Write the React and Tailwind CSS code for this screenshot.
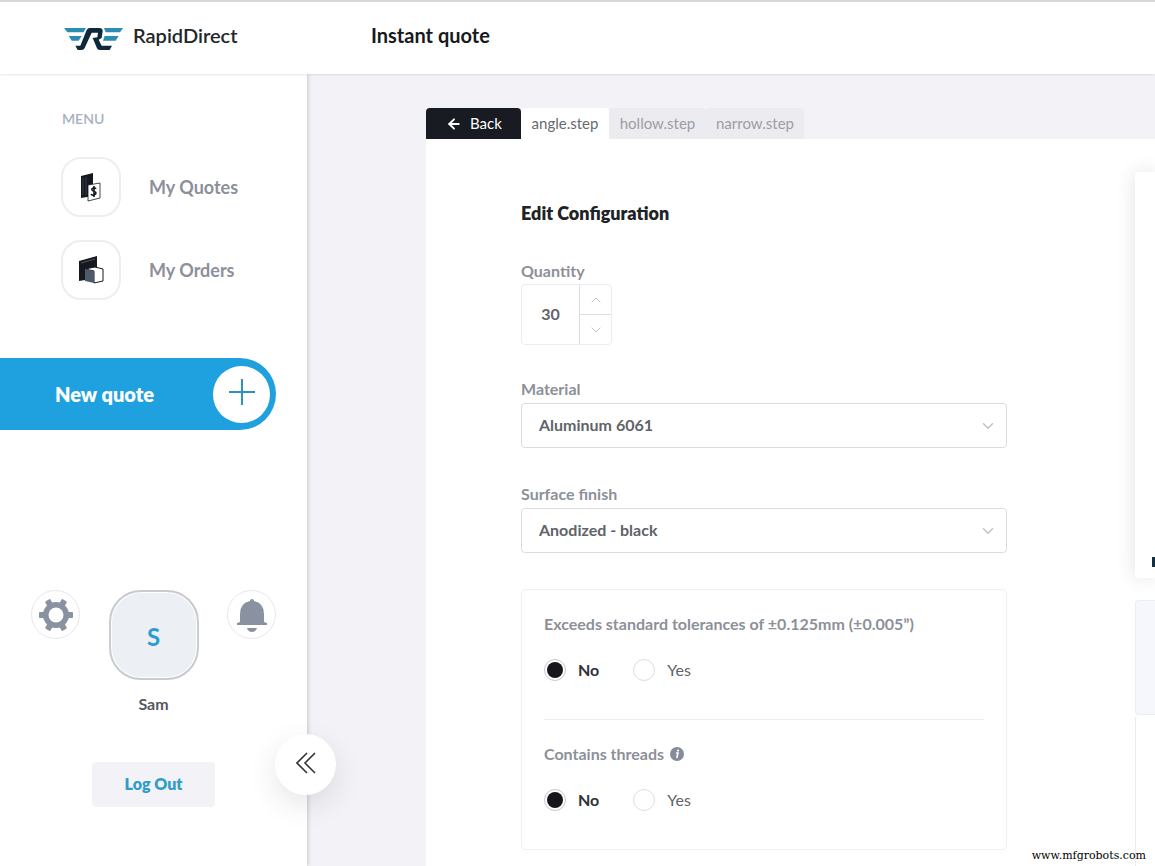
import React from 'react';
import { ArrowLeft, ChevronDown, ChevronUp } from 'lucide-react';

const Logo = () => (
  <svg viewBox="0 0 177 66" className="w-[59px] h-[22px] shrink-0" aria-hidden="true">
    <g fill="#2b8cb4">
      <path d="M0 0h66l-8 13H10z" />
      <path d="M14 24h39l-9 14H23z" />
      <path d="M120 0h57l-9 13h-43z" />
      <path d="M122 24h42l-9 14h-38z" />
    </g>
    <path
      d="M34 53h15L68 6q3-6 9-6h29q10 0 10 10l-3 20-9 5 9 18h31l-7 13h-30q-6 0-8-5L86 30l14-2 2-14H83L62 60q-3 6-9 6H41z"
      fill="#0e2a3a"
    />
  </svg>
);

const QuotesIcon = () => (
  <svg viewBox="0 0 28 30" className="w-7 h-[30px]" aria-hidden="true">
    <path d="M4 4 16 1v23L4 26z" fill="#15181e" />
    <path d="M6 6v17M9 5v18" stroke="#3a4350" strokeWidth="1" />
    <path d="m11 13 12-2v15l-12 3z" fill="#fff" stroke="#15181e" strokeWidth="0.8" />
    <path d="M19 17c-1-2-5-1-4 1 1 2 4 1 4 3s-4 3-5 1M17 14v11" fill="none" stroke="#15181e" strokeWidth="1.6" />
  </svg>
);

const OrdersIcon = () => (
  <svg viewBox="0 0 28 30" className="w-7 h-[30px]" aria-hidden="true">
    <path d="M2 6 20 1v22L2 26z" fill="#15181e" />
    <path d="m4 8 14-4" stroke="#4b5563" />
    <path d="m8 14 10-2 8 2v12l-9 2V16z" fill="#fff" stroke="#15181e" strokeLinejoin="round" />
    <path d="m8 14 9 2v12l-9-2z" fill="#4d5a6c" />
  </svg>
);

const GearIcon = () => (
  <svg viewBox="0 0 34 34" className="w-[34px] h-[34px]" fill="#8a92a1" aria-hidden="true">
    <rect x="0" y="14" width="34" height="6" rx="1" />
    <rect x="0" y="14" width="34" height="6" rx="1" transform="rotate(60 17 17)" />
    <rect x="0" y="14" width="34" height="6" rx="1" transform="rotate(120 17 17)" />
    <circle cx="17" cy="17" r="13" />
    <circle cx="17" cy="17" r="7.5" fill="#fff" />
  </svg>
);

const BellIcon = () => (
  <svg viewBox="0 0 32 34" className="w-8 h-[34px]" fill="#8a92a1" aria-hidden="true">
    <path d="M14 3q0-2 2-2t2 2q10 2 10 13v8l3 1v2H1v-2l3-1v-8Q4 5 14 3z" />
    <path d="M11 30h10q-1 4-5 4t-5-4z" />
  </svg>
);

const InfoIcon = () => (
  <svg viewBox="0 0 14 14" className="w-[14px] h-[14px]" aria-hidden="true">
    <circle cx="7" cy="7" r="7" fill="#858b9b" />
    <circle cx="8" cy="3.6" r="1.1" fill="#fff" />
    <path d="M6 6h2L6.7 11" fill="none" stroke="#fff" strokeWidth="1.6" />
  </svg>
);

const menu = [
  { label: 'My Quotes', icon: QuotesIcon },
  { label: 'My Orders', icon: OrdersIcon },
];

const Header = () => (
  <header className="relative z-10 flex items-center h-[74px] pl-16 bg-white border-t-2 border-[#d8d8da] shadow-[0_1px_2px_rgba(0,0,0,0.1)]">
    <a href="#home" className="flex items-center gap-2.5 w-[307px] shrink-0 pt-0.5 text-xl leading-6 font-semibold text-[#23262b]">
      <Logo />
      <span className="pb-2">RapidDirect</span>
    </a>
    <h1 className="pb-1.5 text-xl leading-6 font-bold text-[#17191c]">Instant quote</h1>
  </header>
);

const Sidebar = () => (
  <aside className="relative w-[307px] shrink-0 bg-white shadow-[1px_0_4px_rgba(0,0,0,0.18)]">
    <h2 className="pt-9 pl-[62px] text-sm leading-[18px] font-semibold text-[#a9b0bd]">MENU</h2>
    <nav className="flex flex-col gap-[23px] mt-[29px] pl-[61px]">
      {menu.map(({ label, icon: Icon }) => (
        <a key={label} href="#menu" className="flex items-center gap-7 text-lg font-bold text-[#8c9099]">
          <span className="flex items-center justify-center w-[60px] h-[60px] rounded-[20px] border-2 border-[#eeeeef]">
            <Icon />
          </span>
          {label}
        </a>
      ))}
    </nav>

    <button className="flex items-center justify-between w-[276px] h-[72px] mt-[58px] pl-[55px] pr-[6px] rounded-r-full bg-[#20a1df] text-xl font-extrabold text-white">
      New quote
      <span className="flex items-center justify-center w-[57px] h-[57px] rounded-full bg-white">
        <svg viewBox="0 0 26 26" className="w-[26px] h-[26px] mb-1" stroke="#2b93bd" strokeWidth="2" aria-hidden="true">
          <path d="M13 0v26M0 13h26" />
        </svg>
      </span>
    </button>

    <div className="flex justify-between mt-[160px] px-[31px]">
      <button aria-label="Settings" className="flex items-center justify-center w-[49px] h-[49px] rounded-full border border-[#e6e7eb]">
        <GearIcon />
      </button>
      <div className="flex flex-col items-center gap-3.5">
        <div className="flex items-center justify-center w-[90px] h-[90px] pt-1 rounded-[32px] border-2 border-[#c9cbd0] bg-[#eceff4] shadow-[inset_0_0_0_1px_#fff] text-2xl font-bold text-[#2b9bd0]">
          S
        </div>
        <span className="text-base leading-5 font-bold text-[#55585e]">Sam</span>
      </div>
      <button aria-label="Notifications" className="flex items-center justify-center w-[49px] h-[49px] rounded-full border border-[#e6e7eb]">
        <BellIcon />
      </button>
    </div>

    <button className="block w-[123px] h-[45px] mt-12 mx-auto pb-0.5 rounded bg-[#f2f2f7] text-base font-extrabold text-[#2f9dc9]">Log Out</button>

    {/* Collapse handle sits on the sidebar edge */}
    <button
      aria-label="Collapse menu"
      className="absolute top-[660px] -right-[29px] flex items-center justify-center w-[61px] h-[61px] pb-1 rounded-full bg-white shadow-[0_10px_30px_rgba(0,0,0,0.1)]"
    >
      <svg viewBox="0 0 20 22" className="w-5 h-[22px]" fill="none" stroke="#333" strokeWidth="1.6" aria-hidden="true">
        <path d="M11 1 1 11l10 10M19 1 9 11l10 10" />
      </svg>
    </button>
  </aside>
);

const Tabs = () => (
  <div className="flex h-[31px] text-[15px] leading-[31px]">
    <button className="flex items-center gap-2 w-[95px] pl-5 rounded-t bg-[#191b22] text-white">
      <ArrowLeft className="w-4 h-4" strokeWidth={3} />
      Back
    </button>
    <button className="w-[88px] rounded-t bg-white text-[#666a70]">angle.step</button>
    <button className="w-[97px] rounded-t bg-[#ececf0] text-[#9b9ea5]">hollow.step</button>
    <button className="w-[98px] rounded-t bg-[#ececf0] text-[#9b9ea5]">narrow.step</button>
  </div>
);

const SelectField = ({ id, label, value }) => (
  <div>
    <label htmlFor={id} className="block text-base leading-5 font-bold text-[#8c9099]">{label}</label>
    <div className="relative mt-1">
      <select
        id={id}
        defaultValue={value}
        className="appearance-none block w-full h-[45px] pl-[17px] pr-10 pb-0.5 rounded border border-[#dcdcde] bg-white text-base font-bold text-[#606368]"
      >
        <option>{value}</option>
      </select>
      <ChevronDown className="absolute right-2.5 top-[14px] w-[18px] h-[18px] text-[#c2c3c7] pointer-events-none" strokeWidth={2} />
    </div>
  </div>
);

const RadioField = ({ name, label, info }) => (
  <fieldset>
    <legend className="flex items-center gap-1.5 text-base leading-5 font-bold text-[#8c9099]">
      {label}
      {info && <InfoIcon />}
    </legend>
    <div className="flex gap-[34px] mt-[25px] text-base leading-[22px] text-[#606368]">
      {['No', 'Yes'].map((option) => (
        <label key={option} className="flex items-center gap-3 has-checked:font-bold has-checked:text-[#303238]">
          <input
            type="radio"
            name={name}
            defaultChecked={option === 'No'}
            className="appearance-none w-[22px] h-[22px] p-0.5 rounded-full border border-[#dedee1] bg-clip-content checked:border-[#c8c8cc] checked:bg-[#15171b]"
          />
          {option}
        </label>
      ))}
    </div>
  </fieldset>
);

const ConfigForm = () => (
  <form className="w-[486px] shrink-0 pt-16">
    <h2 className="text-lg leading-5 font-extrabold text-[#202226]">Edit Configuration</h2>

    <label htmlFor="quantity" className="block mt-[38px] text-base leading-5 font-bold text-[#8c9099]">Quantity</label>
    <div className="flex w-[91px] h-[61px] mt-[3px] rounded border border-[#ececee]">
      <input id="quantity" defaultValue="30" className="w-[57px] pb-0.5 text-center text-base font-bold text-[#606368]" />
      <div className="flex flex-col flex-1 border-l border-[#dedee1] text-[#c2c3c7]">
        <button type="button" aria-label="Increase" className="flex flex-1 items-center justify-center border-b border-[#dedee1]">
          <ChevronUp className="w-4 h-4" strokeWidth={1.5} />
        </button>
        <button type="button" aria-label="Decrease" className="flex flex-1 items-center justify-center">
          <ChevronDown className="w-4 h-4" strokeWidth={1.5} />
        </button>
      </div>
    </div>

    <div className="flex flex-col gap-9 mt-[34px]">
      <SelectField id="material" label="Material" value="Aluminum 6061" />
      <SelectField id="finish" label="Surface finish" value="Anodized - black" />

      <div className="h-[261px] px-[22px] pt-6 rounded border border-[#f0f0f1]">
        <RadioField name="tolerances" label="Exceeds standard tolerances of ±0.125mm (±0.005”)" />
        <hr className="mt-[38px] mb-6 border-[#ececee]" />
        <RadioField name="threads" label="Contains threads" info />
      </div>
    </div>
  </form>
);

const Preview = () => (
  <div className="flex flex-col flex-1 min-w-0 pt-[33px]">
    <div className="relative h-[406px] rounded-l bg-white shadow-[0_0_20px_rgba(0,0,0,0.12)]">
      <div className="absolute right-0 bottom-[11px] w-[3px] h-[10px] bg-[#12303f]" />
    </div>
    <div className="h-[115px] mt-[22px] rounded-l border border-r-0 border-[#ececf4] bg-[#f6f7fd]" />
    <div className="flex-1 rounded-tl border-l border-[#ececf0]" />
  </div>
);

export default function App() {
  return (
    <div className="relative flex flex-col min-h-screen overflow-hidden bg-[#f2f2f7] font-['Lato',sans-serif]">
      <Header />
      <div className="flex flex-1">
        <Sidebar />
        <main className="flex flex-col flex-1 min-w-0 pt-[34px] pl-[119px]">
          <Tabs />
          <div className="flex flex-1 gap-32 pl-[95px] bg-white">
            <ConfigForm />
            <Preview />
          </div>
        </main>
      </div>
      <span className="absolute right-[9px] bottom-0.5 z-10 text-[11px] leading-4 text-black font-['DejaVu_Serif',serif]">www.mfgrobots.com</span>
    </div>
  );
}
